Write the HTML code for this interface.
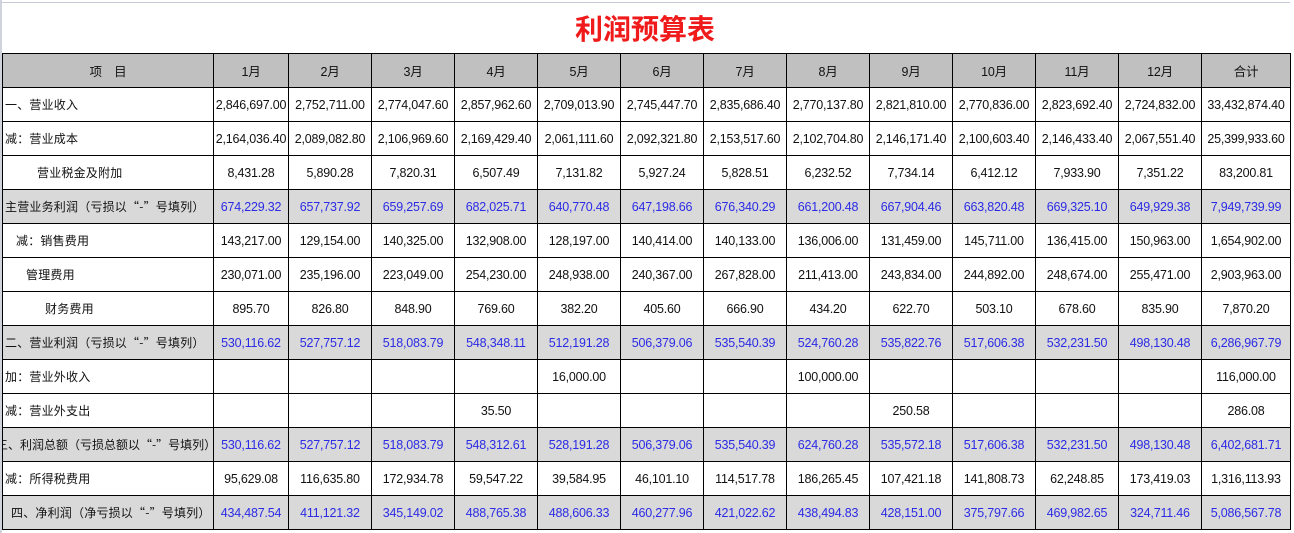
<!DOCTYPE html><html><head><meta charset="utf-8"><style>
body{margin:0;width:1294px;height:533px;overflow:hidden;background:#fff;font-family:"Liberation Sans","Noto Sans CJK SC",sans-serif;position:relative}
.top{position:absolute;left:0;top:0;width:1290px;height:2px;border-bottom:1px solid #c6c9d6}
.lb{position:absolute;left:0;top:0;width:2px;height:533px;background:#d0d3dc}
.title{position:absolute;left:0;width:1290px;top:8px;text-align:center;color:#f01a1a;font-size:28px;font-weight:bold;font-family:"Noto Sans CJK SC",sans-serif}
table{position:absolute;left:2px;top:53px;width:1288px;border-collapse:collapse;table-layout:fixed;font-size:12.5px;color:#111}
td{border:1px solid #000;height:33px;padding:0;text-align:center;white-space:nowrap;overflow:hidden;letter-spacing:-0.2px}
td.l{text-align:left;padding-left:2px;font-family:"Noto Sans CJK SC",sans-serif;font-size:12px;letter-spacing:0.2px;max-width:211px}
tr.h td{background:#c0c0c0}
tr.g td{background:#d9d9d9;color:#2b2be6}
tr.g td.l{color:#111}
</style></head><body>
<div class="top"></div><div class="lb"></div>
<div class="title">利润预算表</div>
<table>
<colgroup><col style="width:211px"><col style="width:75px"><col style="width:83px"><col style="width:83px"><col style="width:83px"><col style="width:83px"><col style="width:83px"><col style="width:83px"><col style="width:83px"><col style="width:83px"><col style="width:83px"><col style="width:83px"><col style="width:83px"><col style="width:89px"></colgroup>
<tr class="h"><td>项　目</td><td>1月</td><td>2月</td><td>3月</td><td>4月</td><td>5月</td><td>6月</td><td>7月</td><td>8月</td><td>9月</td><td>10月</td><td>11月</td><td>12月</td><td>合计</td></tr>
<tr><td class="l">一、营业收入</td><td>2,846,697.00</td><td>2,752,711.00</td><td>2,774,047.60</td><td>2,857,962.60</td><td>2,709,013.90</td><td>2,745,447.70</td><td>2,835,686.40</td><td>2,770,137.80</td><td>2,821,810.00</td><td>2,770,836.00</td><td>2,823,692.40</td><td>2,724,832.00</td><td>33,432,874.40</td></tr>
<tr><td class="l">减：营业成本</td><td>2,164,036.40</td><td>2,089,082.80</td><td>2,106,969.60</td><td>2,169,429.40</td><td>2,061,111.60</td><td>2,092,321.80</td><td>2,153,517.60</td><td>2,102,704.80</td><td>2,146,171.40</td><td>2,100,603.40</td><td>2,146,433.40</td><td>2,067,551.40</td><td>25,399,933.60</td></tr>
<tr><td class="l" style="padding-left:34px">营业税金及附加</td><td>8,431.28</td><td>5,890.28</td><td>7,820.31</td><td>6,507.49</td><td>7,131.82</td><td>5,927.24</td><td>5,828.51</td><td>6,232.52</td><td>7,734.14</td><td>6,412.12</td><td>7,933.90</td><td>7,351.22</td><td>83,200.81</td></tr>
<tr class="g"><td class="l">主营业务利润（亏损以“-”号填列）</td><td>674,229.32</td><td>657,737.92</td><td>659,257.69</td><td>682,025.71</td><td>640,770.48</td><td>647,198.66</td><td>676,340.29</td><td>661,200.48</td><td>667,904.46</td><td>663,820.48</td><td>669,325.10</td><td>649,929.38</td><td>7,949,739.99</td></tr>
<tr><td class="l" style="padding-left:13px">减：销售费用</td><td>143,217.00</td><td>129,154.00</td><td>140,325.00</td><td>132,908.00</td><td>128,197.00</td><td>140,414.00</td><td>140,133.00</td><td>136,006.00</td><td>131,459.00</td><td>145,711.00</td><td>136,415.00</td><td>150,963.00</td><td>1,654,902.00</td></tr>
<tr><td class="l" style="padding-left:23px">管理费用</td><td>230,071.00</td><td>235,196.00</td><td>223,049.00</td><td>254,230.00</td><td>248,938.00</td><td>240,367.00</td><td>267,828.00</td><td>211,413.00</td><td>243,834.00</td><td>244,892.00</td><td>248,674.00</td><td>255,471.00</td><td>2,903,963.00</td></tr>
<tr><td class="l" style="padding-left:42px">财务费用</td><td>895.70</td><td>826.80</td><td>848.90</td><td>769.60</td><td>382.20</td><td>405.60</td><td>666.90</td><td>434.20</td><td>622.70</td><td>503.10</td><td>678.60</td><td>835.90</td><td>7,870.20</td></tr>
<tr class="g"><td class="l">二、营业利润（亏损以“-”号填列）</td><td>530,116.62</td><td>527,757.12</td><td>518,083.79</td><td>548,348.11</td><td>512,191.28</td><td>506,379.06</td><td>535,540.39</td><td>524,760.28</td><td>535,822.76</td><td>517,606.38</td><td>532,231.50</td><td>498,130.48</td><td>6,286,967.79</td></tr>
<tr><td class="l">加：营业外收入</td><td></td><td></td><td></td><td></td><td>16,000.00</td><td></td><td></td><td>100,000.00</td><td></td><td></td><td></td><td></td><td>116,000.00</td></tr>
<tr><td class="l">减：营业外支出</td><td></td><td></td><td></td><td>35.50</td><td></td><td></td><td></td><td></td><td>250.58</td><td></td><td></td><td></td><td>286.08</td></tr>
<tr class="g"><td class="l" style="padding-left:0;text-indent:-7px;letter-spacing:0">三、利润总额（亏损总额以“-”号填列）</td><td>530,116.62</td><td>527,757.12</td><td>518,083.79</td><td>548,312.61</td><td>528,191.28</td><td>506,379.06</td><td>535,540.39</td><td>624,760.28</td><td>535,572.18</td><td>517,606.38</td><td>532,231.50</td><td>498,130.48</td><td>6,402,681.71</td></tr>
<tr><td class="l">减：所得税费用</td><td>95,629.08</td><td>116,635.80</td><td>172,934.78</td><td>59,547.22</td><td>39,584.95</td><td>46,101.10</td><td>114,517.78</td><td>186,265.45</td><td>107,421.18</td><td>141,808.73</td><td>62,248.85</td><td>173,419.03</td><td>1,316,113.93</td></tr>
<tr class="g"><td class="l" style="padding-left:8px">四、净利润（净亏损以“-”号填列）</td><td>434,487.54</td><td>411,121.32</td><td>345,149.02</td><td>488,765.38</td><td>488,606.33</td><td>460,277.96</td><td>421,022.62</td><td>438,494.83</td><td>428,151.00</td><td>375,797.66</td><td>469,982.65</td><td>324,711.46</td><td>5,086,567.78</td></tr>
</table>
</body></html>
